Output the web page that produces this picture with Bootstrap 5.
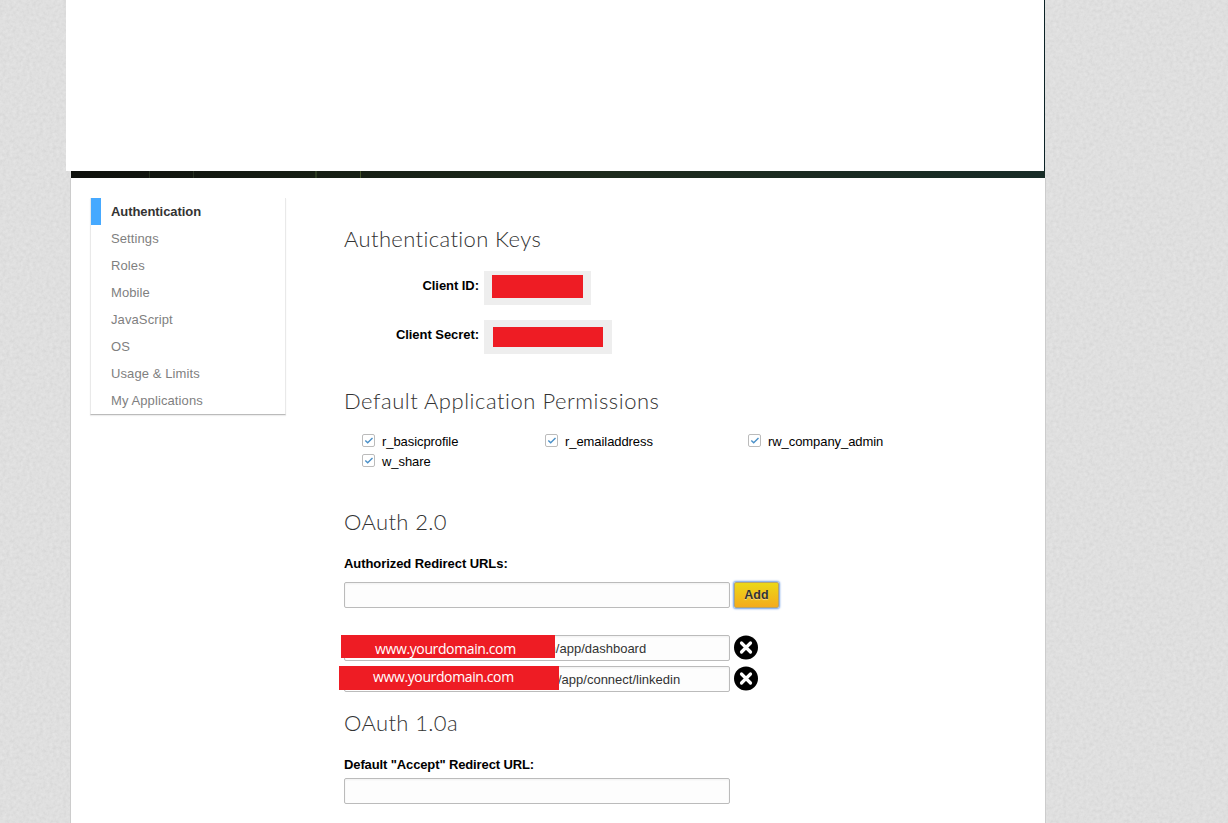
<!DOCTYPE html>
<html lang="en">
<head>
<meta charset="utf-8">
<meta name="viewport" content="width=device-width, initial-scale=1">
<title>Application settings</title>
<link href="https://cdn.jsdelivr.net/npm/bootstrap@5.3.0/dist/css/bootstrap.min.css" rel="stylesheet">
<style>
  body {
    font: 13px/20px "Liberation Sans", Arial, sans-serif;
    color: #000;
    background: #e4e4e4 url("data:image/svg+xml,%3Csvg xmlns='http://www.w3.org/2000/svg' width='200' height='200'%3E%3Cfilter id='n' x='0' y='0' width='100%25' height='100%25'%3E%3CfeTurbulence type='fractalNoise' baseFrequency='.3' numOctaves='3' stitchTiles='stitch'/%3E%3CfeColorMatrix values='0 0 0 0 0 0 0 0 0 0 0 0 0 0 0 .08 0 0 0 -.016'/%3E%3C/filter%3E%3Crect width='200' height='200' filter='url(%23n)'/%3E%3C/svg%3E");
    height: 823px;
    overflow: hidden;
  }
  .page-shell { width: 979px; margin-left: 66px; height: 823px; }
  .top-panel { height: 171px; background: #fff; border-right: 1px solid #0b2226; }
  .dark-strip {
    height: 7px; margin-left: 5px;
    background:
      linear-gradient(#263021, #263021) 78px 0 / 1px 7px no-repeat,
      linear-gradient(#263021, #263021) 122px 0 / 1px 7px no-repeat,
      linear-gradient(#2c3b22, #2c3b22) 244px 0 / 2px 7px no-repeat,
      linear-gradient(#46542c, #46542c) 289px 0 / 1px 7px no-repeat,
      linear-gradient(90deg, #0e100c, #161e14 25%, #1d2a1c 55%, #182c27);
  }
  .content-sheet { margin-left: 4px; width: 976px; background: #fff; border: solid #ccc; border-width: 0 1px; padding-left: 19px; }
  .side-menu { width: 196px; height: 217px; margin-top: 20px; border: 1px solid #e9e9e9; border-top: 0; border-bottom-color: #bbb; box-shadow: 0 1px 1px #eee; }
  .side-menu .nav-link { padding: 0 0 0 20px; height: 27px; line-height: 27px; color: #7f7f7f; letter-spacing: .1px; }
  .side-menu .nav-link.active { color: #333; font-weight: bold; border-left: 10px solid #46a9ff; padding-left: 10px; letter-spacing: -.07px; }
  .main-col { margin-left: 58px; padding-top: 46px; width: 620px; }
  h2 { font: 300 22px/30px Lato, sans-serif; letter-spacing: .38px; color: #333; margin: 0; white-space: nowrap; }
  .key-label { width: 135px; text-align: right; font-weight: bold; padding-top: 5px; letter-spacing: -.05px; }
  .key-box { height: 34px; background: #eee; margin-left: 5px; }
  .redacted { background: #ee1c24; }
  .perm-grid { margin-left: 18px; display: grid; grid-template-columns: 183px 203px auto; grid-auto-rows: 20px; line-height: 22px; letter-spacing: -.07px; }
  .tick-box { width: 13px; height: 13px; margin: 3px 7px 0 0; }
  .field-title { font-weight: bold; line-height: 22px; height: 20px; letter-spacing: -.07px; }
  .field { width: 386px; height: 26px; border: 1px solid #bbb; border-radius: 2px; background: #fdfdfd; padding: 0; box-shadow: inset 0 1px 2px #f0f0f0; color: #333; font-size: 13px; line-height: 26px; white-space: nowrap; }
  .btn-add { width: 45px; height: 26px; margin-left: 4px; padding: 0; border: 1px solid #b7a36a; border-radius: 2px; font: bold 12.5px/24px "Liberation Sans", sans-serif; color: #333; background: linear-gradient(#ecd817, #f4ab1c); text-shadow: 0 1px 1px rgba(255,255,255,.5); box-shadow: 0 0 2px 1px #6f9fe8; }
  .domain-mask { position: absolute; color: #fff; font: 14px/24px "Open Sans", "Noto Sans", sans-serif; letter-spacing: -.38px; }
</style>
</head>
<body>
<div class="page-shell d-flex flex-column">
  <header class="top-panel flex-shrink-0"></header>
  <div class="dark-strip flex-shrink-0"></div>
  <div class="content-sheet d-flex flex-grow-1">
    <nav class="side-menu nav flex-column flex-nowrap flex-shrink-0">
      <a class="nav-link active" href="#">Authentication</a>
      <a class="nav-link" href="#">Settings</a>
      <a class="nav-link" href="#">Roles</a>
      <a class="nav-link" href="#">Mobile</a>
      <a class="nav-link" href="#">JavaScript</a>
      <a class="nav-link" href="#">OS</a>
      <a class="nav-link" href="#">Usage &amp; Limits</a>
      <a class="nav-link" href="#">My Applications</a>
    </nav>
    <main class="main-col">
      <h2>Authentication Keys</h2>
      <div class="d-flex" style="margin-top:17px">
        <div class="key-label">Client ID:</div>
        <div class="key-box" style="width:107px;padding:4px 8px 7px"><div class="redacted h-100"></div></div>
      </div>
      <div class="d-flex" style="margin-top:15px">
        <div class="key-label">Client Secret:</div>
        <div class="key-box" style="width:128px;padding:7px 9px"><div class="redacted h-100"></div></div>
      </div>

      <h2 style="margin-top:32px;letter-spacing:.53px">Default Application Permissions</h2>
      <svg class="d-none"><symbol id="tick" viewBox="0 0 13 13"><rect x=".5" y=".5" width="12" height="12" rx="1.5" fill="#fff" stroke="#bbb"/><path d="M3.3 6.4 5.7 8.8 10.5 4" fill="none" stroke="#4a90c8" stroke-width="1.4"/></symbol></svg>
      <div class="perm-grid" style="margin-top:15px">
        <div class="d-flex"><svg class="tick-box"><use href="#tick"/></svg>r_basicprofile</div>
        <div class="d-flex"><svg class="tick-box"><use href="#tick"/></svg>r_emailaddress</div>
        <div class="d-flex"><svg class="tick-box"><use href="#tick"/></svg>rw_company_admin</div>
        <div class="d-flex"><svg class="tick-box"><use href="#tick"/></svg>w_share</div>
      </div>

      <h2 style="margin-top:36px">OAuth 2.0</h2>
      <div class="field-title" style="margin-top:16px">Authorized Redirect URLs:</div>
      <div class="d-flex" style="margin-top:9px;height:26px">
        <div class="field"></div>
        <button class="btn btn-add">Add</button>
      </div>

      <svg class="d-none"><symbol id="remove" viewBox="0 0 24 24"><circle cx="12" cy="12" r="12"/><path d="M7.5 7.5 16.5 16.5M16.5 7.5 7.5 16.5" fill="none" stroke="#fff" stroke-width="3.2" stroke-linecap="round"/></symbol></svg>
      <div class="d-flex position-relative" style="margin-top:27px">
        <div class="field" style="padding-left:200px">m/app/dashboard</div>
        <svg width="24" height="25" style="margin-left:4px"><use href="#remove"/></svg>
        <div class="domain-mask redacted" style="left:-3px;top:0;width:214px;height:23px;padding-left:34px;line-height:27px">www.yourdomain.com</div>
      </div>
      <div class="d-flex position-relative" style="margin-top:5px">
        <div class="field" style="padding-left:213px">/app/connect/linkedin</div>
        <svg width="24" height="25" style="margin-left:4px"><use href="#remove"/></svg>
        <div class="domain-mask redacted" style="left:-5px;top:0;width:220px;height:24px;padding-left:34px;line-height:22px">www.yourdomain.com</div>
      </div>

      <h2 style="margin-top:16px">OAuth 1.0a</h2>
      <div class="field-title" style="margin-top:16px;letter-spacing:-.12px">Default "Accept" Redirect URL:</div>
      <div class="field" style="margin-top:4px"></div>
    </main>
  </div>
</div>
<script src="https://cdn.jsdelivr.net/npm/bootstrap@5.3.0/dist/js/bootstrap.bundle.min.js"></script>
</body>
</html>
